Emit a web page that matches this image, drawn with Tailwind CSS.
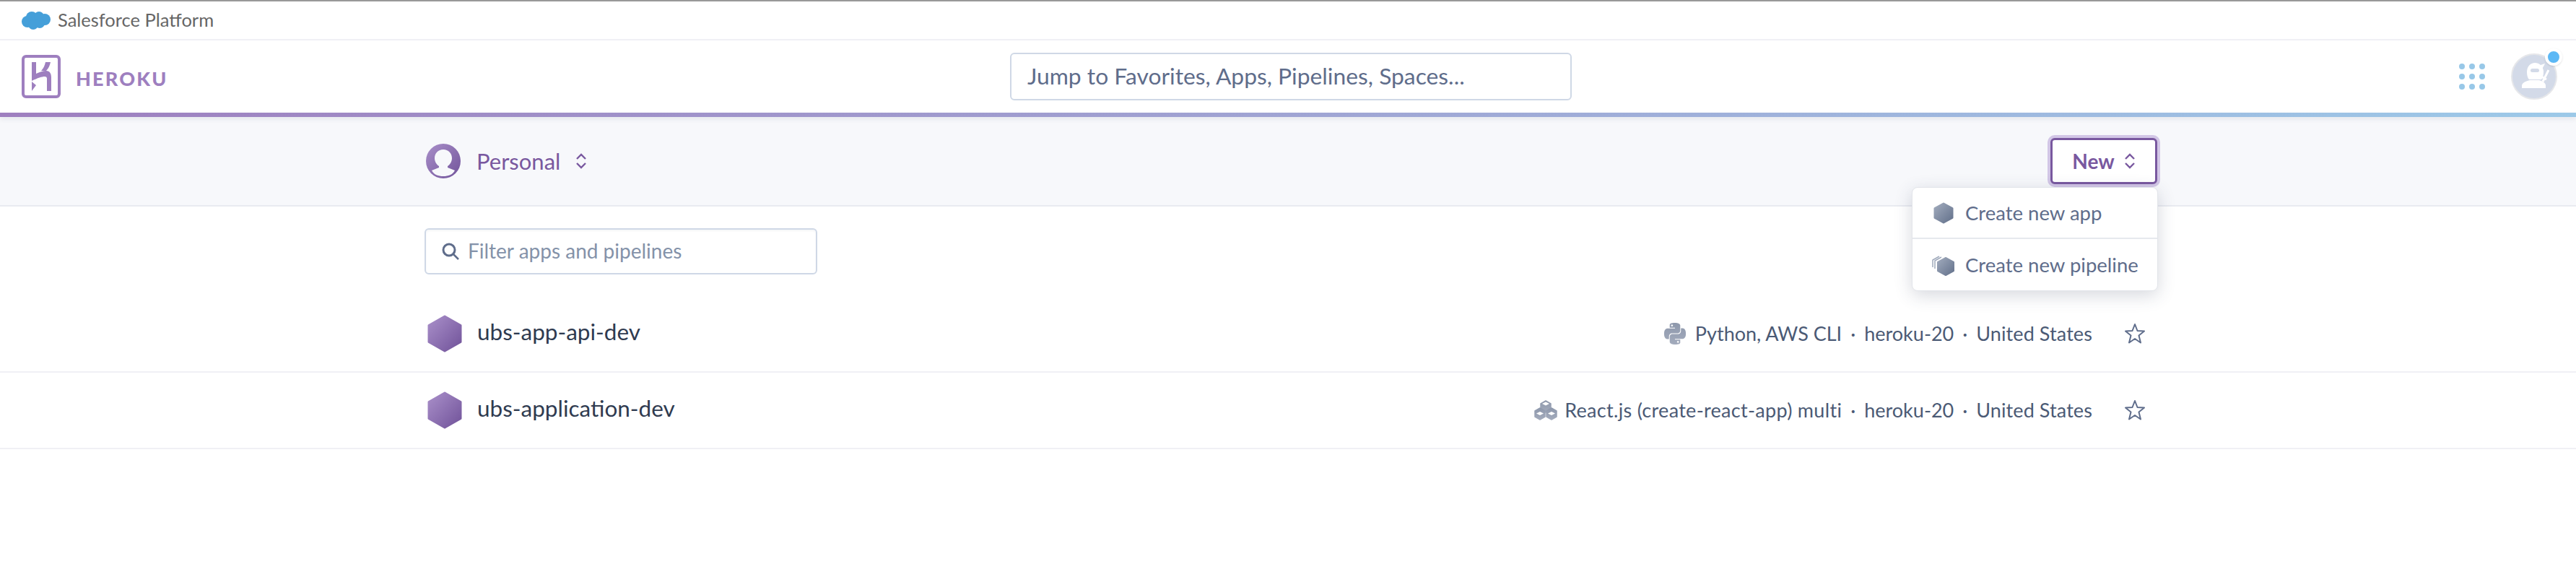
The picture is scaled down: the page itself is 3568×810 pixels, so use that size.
<!doctype html>
<html>
<head>
<meta charset="utf-8">
<script src="https://cdn.jsdelivr.net/npm/@tailwindcss/browser@4"></script>
</head>
<body class="bg-white [font-family:Lato,'Noto_Sans',sans-serif] overflow-hidden h-[810px]">
<svg class="absolute w-0 h-0" aria-hidden="true">
  <defs>
    <linearGradient id="pur" x1="0" y1="0" x2="1" y2="1"><stop offset="0" stop-color="#a98fc9"/><stop offset="1" stop-color="#71539a"/></linearGradient>
    <linearGradient id="gry" x1="0" y1="0" x2="1" y2="1"><stop offset="0" stop-color="#a0aabc"/><stop offset="1" stop-color="#64728c"/></linearGradient>
    <linearGradient id="gry2" x1="0" y1="0" x2="0" y2="1"><stop offset="0" stop-color="#8e98ac"/><stop offset="1" stop-color="#a3abbc"/></linearGradient>
  </defs>
</svg>

<div class="h-[2px] bg-[#999999]"></div>

<!-- Salesforce bar -->
<div class="h-[54px] border-b-2 border-[#f0f0f5] flex items-center pl-[30px] gap-[10px]">
  <svg class="w-[40px] h-[28px]" viewBox="0 0 40 28" fill="#459fd9">
    <circle cx="14" cy="10" r="8"/><circle cx="24" cy="9" r="7"/><circle cx="32" cy="13" r="8"/><circle cx="8" cy="16" r="8"/><circle cx="16" cy="20" r="7"/><circle cx="25" cy="18" r="7"/>
  </svg>
  <span class="text-[25.500px] text-[#666666] leading-none">Salesforce Platform</span>
</div>

<!-- Heroku header -->
<div class="relative h-[100px] flex items-center pl-[30px] pr-[26px]">
  <svg class="w-[54px] h-[60px] shrink-0" viewBox="0 0 54 60" fill="#9e7fbf">
    <rect x="2" y="2" width="50" height="56" rx="4" fill="none" stroke="#9e7fbf" stroke-width="4"/>
    <path d="M14 10h6v16c5-2 9-4 14-4 5 0 7 4 7 9v19h-6V33c0-2-1-3-3-3-4 0-10 2-18 6z"/>
    <path d="M33 10h7c-1 5-3 9-6 12h-7c3-3 5-7 6-12z"/>
    <path d="M14 37l6 5-6 8z"/>
  </svg>
  <span class="ml-[21px] text-[27px] font-black tracking-[2.2px] text-[#9e7fbf] leading-none mt-[4px]">HEROKU</span>
  <div class="absolute left-[1399px] top-[17px] w-[778px] h-[66px] border-2 border-[#cfd8e6] rounded-[6px] flex items-center pl-[22px] text-[31.800px] text-[#5f6d8b]">Jump to Favorites, Apps, Pipelines, Spaces...</div>
  <div class="ml-auto flex items-center gap-[36px]">
    <div class="grid grid-cols-3 gap-[6px]">
      <span class="w-[8px] h-[8px] rounded-full bg-[#98c8e8]"></span><span class="w-[8px] h-[8px] rounded-full bg-[#98c8e8]"></span><span class="w-[8px] h-[8px] rounded-full bg-[#98c8e8]"></span>
      <span class="w-[8px] h-[8px] rounded-full bg-[#98c8e8]"></span><span class="w-[8px] h-[8px] rounded-full bg-[#98c8e8]"></span><span class="w-[8px] h-[8px] rounded-full bg-[#98c8e8]"></span>
      <span class="w-[8px] h-[8px] rounded-full bg-[#98c8e8]"></span><span class="w-[8px] h-[8px] rounded-full bg-[#98c8e8]"></span><span class="w-[8px] h-[8px] rounded-full bg-[#98c8e8]"></span>
    </div>
    <div class="relative w-[64px] h-[64px] rounded-full bg-[#d3dae8] border-2 border-[#e6e7ea]">
      <svg class="w-[60px] h-[60px]" viewBox="0 0 60 60" fill="#ffffff">
        <path d="M20 24c0-8 5-13 11-13 3 0 6 1 8 3l6-2-2 4c-1 1-1 2-1 3 1 2 1 3 1 5 0 4-1 8-3 10h-17c-2-2-3-6-3-10z"/>
        <path d="M13 46v-3c0-4 4-6 11-8h13c6 2 9 4 9 8v3z"/>
        <path d="M50 21l-8 16M40 30l7 4" stroke="#ffffff" stroke-width="3" fill="none"/>
        <rect x="25" y="19" width="12" height="5" rx="2.500" fill="#d3dae8"/>
      </svg>
      <span class="absolute right-[-9px] top-[-9px] w-[24px] h-[24px] rounded-full bg-[#5cb8f5] border-[4px] border-white shadow-sm"></span>
    </div>
  </div>
</div>

<!-- gradient bar -->
<div class="relative z-10 h-[6px] bg-gradient-to-r from-[#9e7fbf] to-[#9cc9e8] shadow-[0_3px_6px_rgba(60,70,100,0.1)]"></div>

<!-- sub header -->
<div class="h-[124px] bg-[#f7f8fb] border-b-2 border-[#e9ebf1]">
  <div class="relative w-[2400px] mx-auto h-full pl-[6px] flex items-center justify-between">
    <div class="flex items-center">
      <svg class="w-[48px] h-[48px]" viewBox="0 0 48 48">
        <circle cx="24" cy="24" r="24" fill="url(#pur)"/>
        <path d="M24 8c7 0 12 5 12 12 0 5-3 9-6 11v2l10 4c-3 6-9 8-16 8s-13-2-16-8l10-4v-2c-3-2-6-6-6-11 0-7 5-12 12-12z" fill="#f7f8fb"/>
      </svg>
      <span class="ml-[22px] text-[31px] text-[#79589f] leading-none">Personal</span>
      <svg class="ml-[21px] w-[16px] h-[22px]" viewBox="0 0 16 22" fill="none" stroke="#79589f" stroke-width="2.4"><path d="M2 8l6-6 6 6M2 14l6 6 6-6"/></svg>
    </div>
    <div class="mr-[-4px] w-[148px] h-[64px] bg-white border-[3px] border-[#79589f] rounded-[6px] ring-[4px] ring-[#d2c6e6] flex items-center justify-center gap-[13px]">
      <span class="text-[28px] font-bold text-[#79589f] leading-none">New</span>
      <svg class="w-[16px] h-[22px]" viewBox="0 0 16 22" fill="none" stroke="#79589f" stroke-width="2.4"><path d="M2 8l6-6 6 6M2 14l6 6 6-6"/></svg>
    </div>
    <!-- menu -->
    <div class="absolute z-20 left-[2064px] top-[97px] w-[341px] h-[144px] bg-white rounded-[8px] border border-[#e3e5ea] shadow-[0_6px_24px_rgba(50,60,90,0.2)] flex flex-col text-[27.500px] text-[#5f6d8b]">
      <div class="h-[71px] flex items-center pl-[29px] gap-[16px] border-b-2 border-[#e6e9ee]">
        <svg class="w-[28px] h-[30px]" viewBox="0 0 28 30"><polygon points="14,2 26,8.500 26,21.500 14,28 2,21.500 2,8.500" fill="url(#gry)" stroke="url(#gry)" stroke-width="3" stroke-linejoin="round"/></svg>
        <span class="leading-none">Create new app</span>
      </div>
      <div class="flex-1 flex items-center pl-[27px] gap-[14px]">
        <svg class="w-[32px] h-[32px]" viewBox="0 0 32 32">
          <path d="M1 19V9l9-5" fill="none" stroke="#a0aabc" stroke-width="1.500"/>
          <path d="M4 21V10l9-5" fill="none" stroke="#a0aabc" stroke-width="1.500"/>
          <polygon points="19,6 30,12 30,24 19,30 8,24 8,12" fill="url(#gry)" stroke="url(#gry)" stroke-width="2" stroke-linejoin="round"/>
        </svg>
        <span class="leading-none">Create new pipeline</span>
      </div>
    </div>
  </div>
</div>

<div class="w-[2400px] mx-auto pl-1 pr-1">
  <!-- filter -->
  <div class="pt-[30px] pb-[30px]">
    <div class="w-[544px] h-[64px] border-2 border-[#cfd8e6] rounded-[6px] flex items-center pl-[22px] gap-[12px] text-[28px] text-[#8492a9] shadow-[inset_0_2px_3px_rgba(60,70,100,0.05)]">
      <svg class="w-[24px] h-[24px] shrink-0" viewBox="0 0 24 24" fill="none" stroke="#5f6d8b"><circle cx="10" cy="10" r="8" stroke-width="3"/><path d="M16 16l7 7" stroke-width="2.500"/></svg>
      <span class="leading-none mb-[2px]">Filter apps and pipelines</span>
    </div>
  </div>
</div>

<div class="w-full border-b-2 border-[#f0f0f5] h-[106px]">
  <div class="w-[2400px] mx-auto h-full pl-[8px] pr-[12px] flex items-center">
    <svg class="w-[48px] h-[52px]" viewBox="0 0 48 52"><polygon points="24,2 46,14.500 46,37.500 24,50 2,37.500 2,14.500" fill="url(#pur)" stroke="url(#pur)" stroke-width="3" stroke-linejoin="round"/></svg>
    <span class="ml-[21px] text-[31.500px] text-[#2f3b50] leading-none mb-[5px]">ubs-app-api-dev</span>
    <div class="ml-auto flex items-center text-[27px] text-[#4b5a75] leading-none">
      <svg class="w-[30px] h-[30px] mr-[13px]" viewBox="0 0 24 24" fill="url(#gry2)">
        <path d="M14.25.18l.9.2.73.26.59.3.45.32.34.34.25.34.16.33.1.3.04.26.02.2-.01.13V8.5l-.05.63-.13.55-.21.46-.26.38-.3.31-.33.25-.35.19-.35.14-.33.1-.3.07-.26.04-.21.02H8.77l-.69.05-.59.14-.5.22-.41.27-.33.32-.27.35-.2.36-.15.37-.1.35-.07.32-.04.27-.02.21v3.06H3.17l-.21-.03-.28-.07-.32-.12-.35-.18-.36-.26-.36-.36-.35-.46-.32-.59-.28-.73-.21-.88-.14-1.05-.05-1.23.06-1.22.16-1.04.24-.87.32-.71.36-.57.4-.44.42-.33.42-.24.4-.16.36-.1.32-.05.24-.01h.16l.06.01h8.16v-.83H6.18l-.01-2.75-.02-.37.05-.34.11-.31.17-.28.25-.26.31-.23.38-.2.44-.18.51-.15.58-.12.64-.1.71-.06.77-.04.84-.02 1.27.05zm-6.3 1.98l-.23.33-.08.41.08.41.23.34.33.22.41.09.41-.09.33-.22.23-.34.08-.41-.08-.41-.23-.33-.33-.22-.41-.09-.41.09zm13.09 3.95l.28.06.32.12.35.18.36.27.36.35.35.47.32.59.28.73.21.88.14 1.04.05 1.23-.06 1.23-.16 1.04-.24.86-.32.71-.36.57-.4.45-.42.33-.42.24-.4.16-.36.09-.32.05-.24.02-.16-.01h-8.22v.82h5.84l.01 2.76.02.36-.05.34-.11.31-.17.29-.25.25-.31.24-.38.2-.44.17-.51.15-.58.13-.64.09-.71.07-.77.04-.84.01-1.27-.04-1.07-.14-.9-.2-.73-.25-.59-.3-.45-.33-.34-.34-.25-.34-.16-.33-.1-.3-.04-.25-.02-.2.01-.13v-5.34l.05-.64.13-.54.21-.46.26-.38.3-.32.33-.24.35-.2.35-.14.33-.1.3-.06.26-.04.21-.02.13-.01h5.84l.69-.05.59-.14.5-.21.41-.28.33-.32.27-.35.2-.36.15-.36.1-.35.07-.32.04-.28.02-.21V6.07h2.09l.14.01zm-6.47 14.25l-.23.33-.08.41.08.41.23.33.33.23.41.08.41-.08.33-.23.23-.33.08-.41-.08-.41-.23-.33-.33-.23-.41-.08-.41.08z"/>
      </svg>
      <span class="mb-[2px]">Python, AWS CLI</span><span class="mx-[12px] mb-[2px]">·</span><span class="mb-[2px]">heroku-20</span><span class="mx-[12px] mb-[2px]">·</span><span class="mb-[2px] tracking-[0.1px]">United States</span>
      <svg class="ml-[44px] w-[30px] h-[30px]" viewBox="0 0 30 30" fill="none" stroke="#5f6d8b" stroke-width="2" stroke-linejoin="round"><polygon points="15,2 18.500,11 28,11.500 20.500,17.500 23,27.500 15,22 7,27.500 9.500,17.500 2,11.500 11.500,11"/></svg>
    </div>
  </div>
</div>

<div class="w-full border-b-2 border-[#f0f0f5] h-[106px]">
  <div class="w-[2400px] mx-auto h-full pl-[8px] pr-[12px] flex items-center">
    <svg class="w-[48px] h-[52px]" viewBox="0 0 48 52"><polygon points="24,2 46,14.500 46,37.500 24,50 2,37.500 2,14.500" fill="url(#pur)" stroke="url(#pur)" stroke-width="3" stroke-linejoin="round"/></svg>
    <span class="ml-[21px] text-[31.500px] text-[#2f3b50] leading-none mb-[5px]">ubs-application-dev</span>
    <div class="ml-auto flex items-center text-[27px] text-[#4b5a75] leading-none">
      <svg class="w-[32px] h-[28px] mr-[10px]" viewBox="0 0 32 28">
        <g fill="url(#gry2)" stroke="url(#gry2)" stroke-width="1.500" stroke-linejoin="round"><polygon points="16,1 23,5 23,13 16,17 9,13 9,5"/><polygon points="8,11 15,15 15,23 8,27 1,23 1,15"/><polygon points="24,11 31,15 31,23 24,27 17,23 17,15"/></g>
        <g fill="#ffffff"><polygon points="16,2.500 21,5 16,7.500 11,5"/><polygon points="8,16 13,18.500 8,21 3,18.500"/><polygon points="24,16 29,18.500 24,21 19,18.500"/></g>
      </svg>
      <span class="mb-[2px] tracking-[0.3px]">React.js (create-react-app) multi</span><span class="mx-[12px] mb-[2px]">·</span><span class="mb-[2px]">heroku-20</span><span class="mx-[12px] mb-[2px]">·</span><span class="mb-[2px] tracking-[0.1px]">United States</span>
      <svg class="ml-[44px] w-[30px] h-[30px]" viewBox="0 0 30 30" fill="none" stroke="#5f6d8b" stroke-width="2" stroke-linejoin="round"><polygon points="15,2 18.500,11 28,11.500 20.500,17.500 23,27.500 15,22 7,27.500 9.500,17.500 2,11.500 11.500,11"/></svg>
    </div>
  </div>
</div>
</body>
</html>
